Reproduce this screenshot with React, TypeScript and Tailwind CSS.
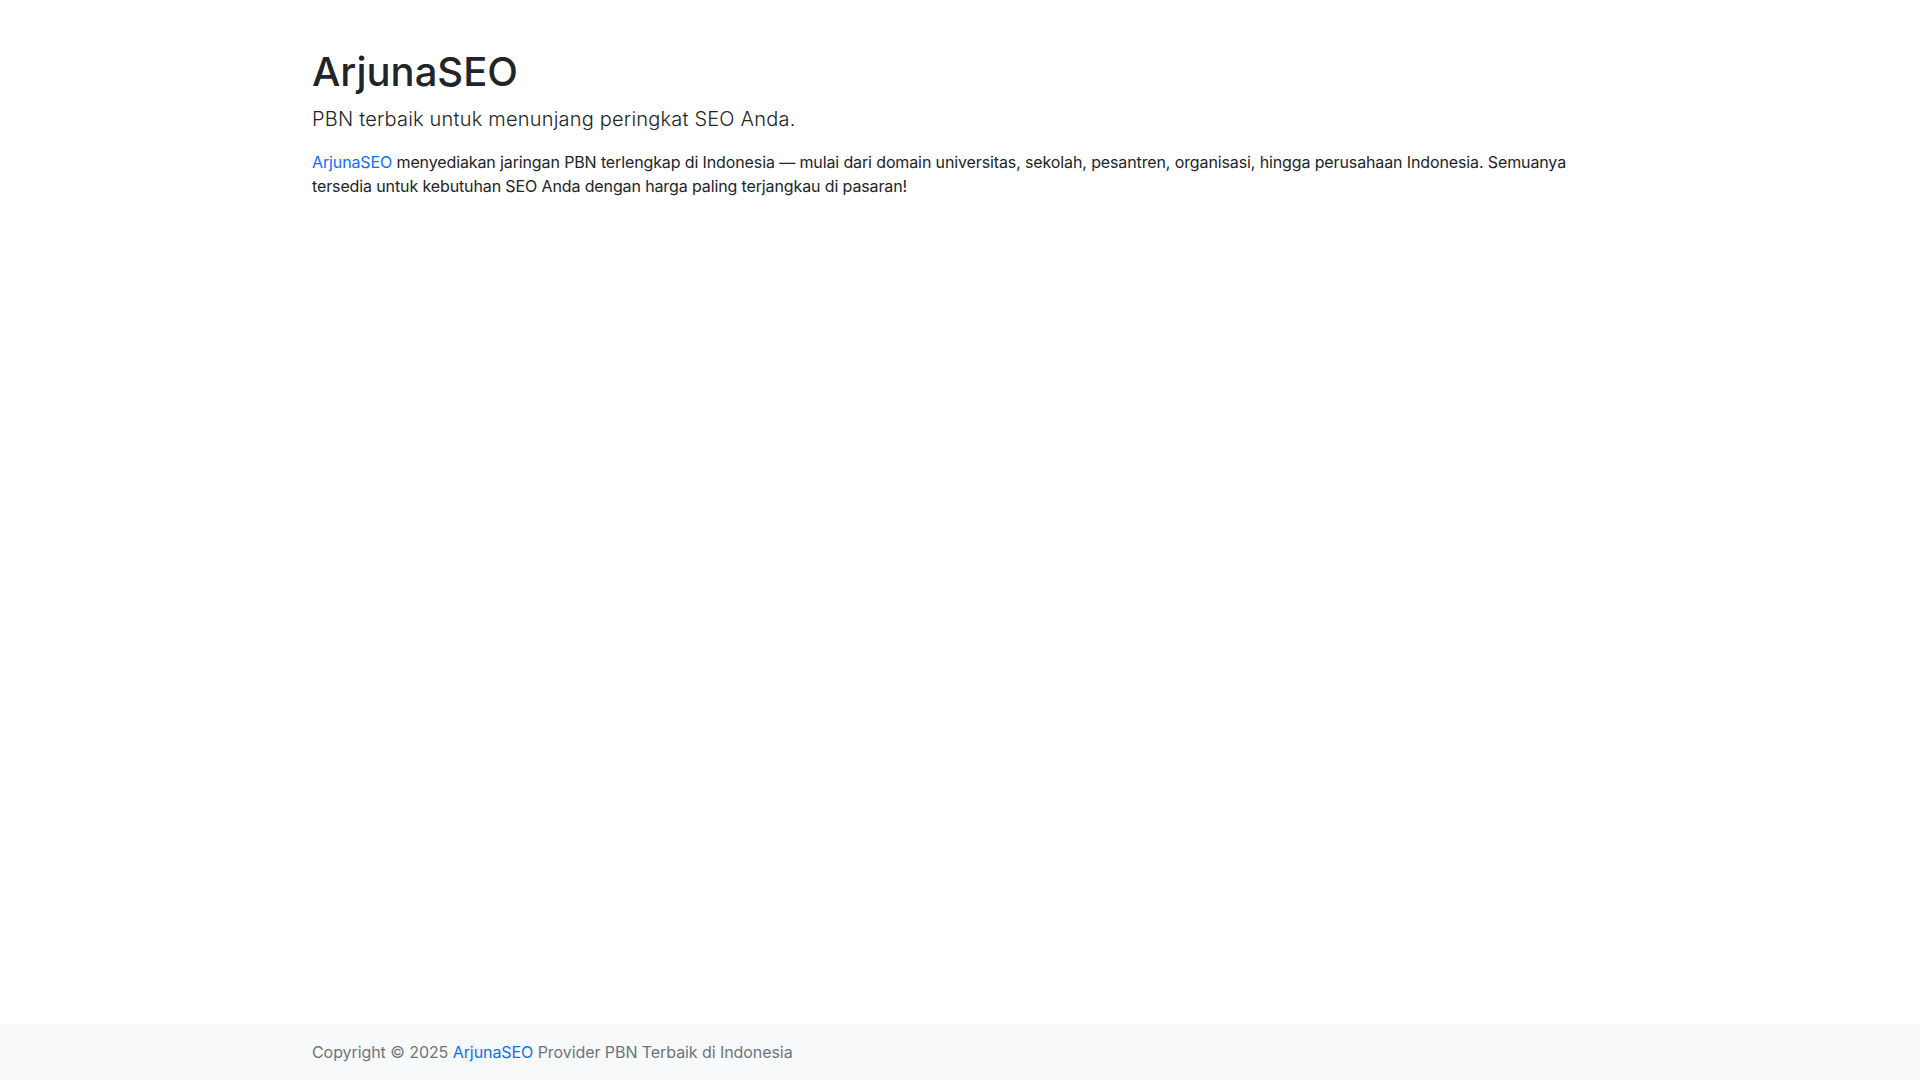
const App = () => {
    return (
        <div className="min-h-screen flex flex-col bg-white text-[#212529] font-['Inter','Liberation_Sans',sans-serif]">
            <main className="w-full max-w-[1320px] mx-auto px-3 py-12">
                <h1 className="text-[40px] leading-[1.2] font-medium mb-2">ArjunaSEO</h1>
                <p className="text-xl leading-[1.5] font-light tracking-[0.2px] mb-4">PBN terbaik untuk menunjang peringkat SEO Anda.</p>
                <p className="text-base leading-6 tracking-[-0.12px]">
                    <a href="#" className="text-[#0d6efd]">ArjunaSEO</a> menyediakan jaringan PBN terlengkap di Indonesia — mulai dari domain universitas, sekolah, pesantren, organisasi, hingga perusahaan Indonesia. Semuanya tersedia untuk kebutuhan SEO Anda dengan harga paling terjangkau di pasaran!
                </p>
            </main>
            <footer className="mt-auto bg-[#f8f9fa] py-4">
                <div className="w-full max-w-[1320px] mx-auto px-3 text-base leading-6 tracking-[-0.07px] text-[#6c757d]">
                    Copyright © 2025 <a href="#" className="text-[#0d6efd]">ArjunaSEO</a> Provider PBN Terbaik di Indonesia
                </div>
            </footer>
        </div>
    )
}
export default App;
